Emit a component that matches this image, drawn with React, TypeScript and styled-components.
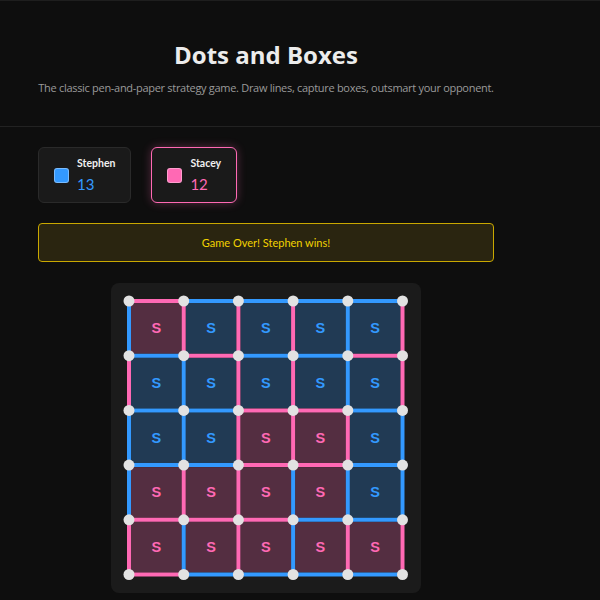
import React from 'react';
import styled, { createGlobalStyle } from 'styled-components';

const GlobalStyle = createGlobalStyle`
  html, body {
    margin: 0;
    padding: 0;
    background: #0e0e0e;
    color: #e8e8e8;
    font-family: Lato, "Open Sans", "Noto Sans", sans-serif;
  }
  * { box-sizing: border-box; }
`;

const BLUE = '#3399ff';
const PINK = '#ff69b4';

const Page = styled.div`
  min-height: 600px;
  border-top: 1px solid #1e1e1e;
`;

const Header = styled.header`
  border-bottom: 1px solid #222;
  padding: 39px 0 30px;
  font-family: "Open Sans", "Noto Sans", sans-serif;
`;

const HeaderInner = styled.div`
  width: 456px;
  margin-left: 38px;
  text-align: center;
`;

const Title = styled.h1`
  margin: 0;
  font-size: 24px;
  line-height: 30px;
  font-weight: 700;
  color: #ececec;
`;

const Subtitle = styled.p`
  margin: 10px 0 0;
  font-size: 11px;
  line-height: 16px;
  letter-spacing: -0.3px;
  color: #9a9a9a;
  white-space: nowrap;
`;

const Main = styled.main`
  width: 456px;
  margin-left: 38px;
  padding-top: 20px;
  display: flex;
  flex-direction: column;
  gap: 20px;
`;

const Players = styled.div`
  display: flex;
  gap: 20px;
`;

const PlayerCard = styled.div<{ $active?: boolean; $color: string }>`
  display: flex;
  align-items: center;
  gap: 8px;
  height: 56px;
  padding: 0 15px;
  background: #1a1a1a;
  border-radius: 6px;
  border: 1px solid ${(p) => (p.$active ? p.$color : '#2a2a2a')};
  box-shadow: ${(p) => (p.$active ? '0 0 10px rgba(255, 105, 180, 0.3)' : 'none')};
`;

const Swatch = styled.span<{ $color: string }>`
  width: 15px;
  height: 15px;
  border-radius: 3px;
  background: ${(p) => p.$color};
  border: 1px solid rgba(255, 255, 255, 0.35);
  margin-top: 1px;
`;

const PlayerInfo = styled.div`
  display: flex;
  flex-direction: column;
`;

const PlayerName = styled.span`
  font-size: 10.5px;
  font-weight: 700;
  line-height: 14px;
  color: #f0f0f0;
`;

const PlayerScore = styled.span<{ $color: string }>`
  font-size: 15px;
  line-height: 20px;
  margin-top: 4px;
  color: ${(p) => p.$color};
`;

const Status = styled.div`
  border: 1px solid #c9a800;
  border-radius: 4px;
  background: #2a2510;
  padding: 11px;
  text-align: center;
  font-size: 11px;
  line-height: 15px;
  color: #f2d200;
`;

const BoardWrap = styled.div`
  align-self: center;
  margin-top: 1px;
  width: 310px;
  height: 310px;
  background: #1b1b1b;
  border-radius: 8px;
`;

type Owner = 'B' | 'P';

const boxes: Owner[][] = [
  ['P', 'B', 'B', 'B', 'B'],
  ['B', 'B', 'B', 'B', 'B'],
  ['B', 'B', 'P', 'P', 'B'],
  ['P', 'P', 'P', 'P', 'B'],
  ['P', 'P', 'P', 'P', 'P'],
];

// horizontal edges: 6 rows x 5 cols
const hEdges: Owner[][] = [
  ['P', 'B', 'B', 'B', 'B'],
  ['B', 'P', 'B', 'B', 'P'],
  ['B', 'B', 'P', 'P', 'B'],
  ['B', 'B', 'P', 'P', 'B'],
  ['P', 'P', 'P', 'B', 'B'],
  ['P', 'B', 'B', 'B', 'B'],
];

// vertical edges: 5 rows x 6 cols
const vEdges: Owner[][] = [
  ['B', 'P', 'P', 'P', 'B', 'P'],
  ['P', 'B', 'P', 'P', 'B', 'P'],
  ['B', 'B', 'P', 'P', 'P', 'B'],
  ['B', 'P', 'P', 'B', 'B', 'B'],
  ['P', 'B', 'P', 'B', 'P', 'P'],
];

const color = (o: Owner) => (o === 'B' ? BLUE : PINK);
const fill = (o: Owner) => (o === 'B' ? 'rgba(51,153,255,0.25)' : 'rgba(255,105,180,0.25)');

const OFF = 18;
const STEP = 54.7;
const pos = (i: number) => OFF + i * STEP;

const Board: React.FC = () => (
  <svg width="310" height="310" viewBox="0 0 310 310">
    {boxes.map((row, r) =>
      row.map((o, c) => (
        <g key={`b${r}${c}`}>
          <rect x={pos(c) + 2} y={pos(r) + 2} width={STEP - 4} height={STEP - 4} fill={fill(o)} />
          <text
            x={pos(c) + STEP / 2}
            y={pos(r) + STEP / 2 + 5}
            textAnchor="middle"
            fontSize="14.5"
            fontWeight="700"
            fontFamily="'Liberation Sans', Arial, sans-serif"
            fill={color(o)}
          >
            S
          </text>
        </g>
      ))
    )}
    {hEdges.map((row, r) =>
      row.map((o, c) => (
        <line key={`h${r}${c}`} x1={pos(c)} y1={pos(r)} x2={pos(c + 1)} y2={pos(r)} stroke={color(o)} strokeWidth="4" />
      ))
    )}
    {vEdges.map((row, r) =>
      row.map((o, c) => (
        <line key={`v${r}${c}`} x1={pos(c)} y1={pos(r)} x2={pos(c)} y2={pos(r + 1)} stroke={color(o)} strokeWidth="4" />
      ))
    )}
    {Array.from({ length: 6 }).map((_, r) =>
      Array.from({ length: 6 }).map((__, c) => (
        <circle key={`d${r}${c}`} cx={pos(c)} cy={pos(r)} r="5.5" fill="#e2e2e2" />
      ))
    )}
  </svg>
);

const App: React.FC = () => (
  <Page>
    <GlobalStyle />
    <Header>
      <HeaderInner>
        <Title>Dots and Boxes</Title>
        <Subtitle>The classic pen-and-paper strategy game. Draw lines, capture boxes, outsmart your opponent.</Subtitle>
      </HeaderInner>
    </Header>
    <Main>
      <Players>
        <PlayerCard $color={BLUE}>
          <Swatch $color={BLUE} />
          <PlayerInfo>
            <PlayerName>Stephen</PlayerName>
            <PlayerScore $color={BLUE}>13</PlayerScore>
          </PlayerInfo>
        </PlayerCard>
        <PlayerCard $active $color={PINK}>
          <Swatch $color={PINK} />
          <PlayerInfo>
            <PlayerName>Stacey</PlayerName>
            <PlayerScore $color={PINK}>12</PlayerScore>
          </PlayerInfo>
        </PlayerCard>
      </Players>
      <Status>Game Over! Stephen wins!</Status>
      <BoardWrap>
        <Board />
      </BoardWrap>
    </Main>
  </Page>
);

export default App;
